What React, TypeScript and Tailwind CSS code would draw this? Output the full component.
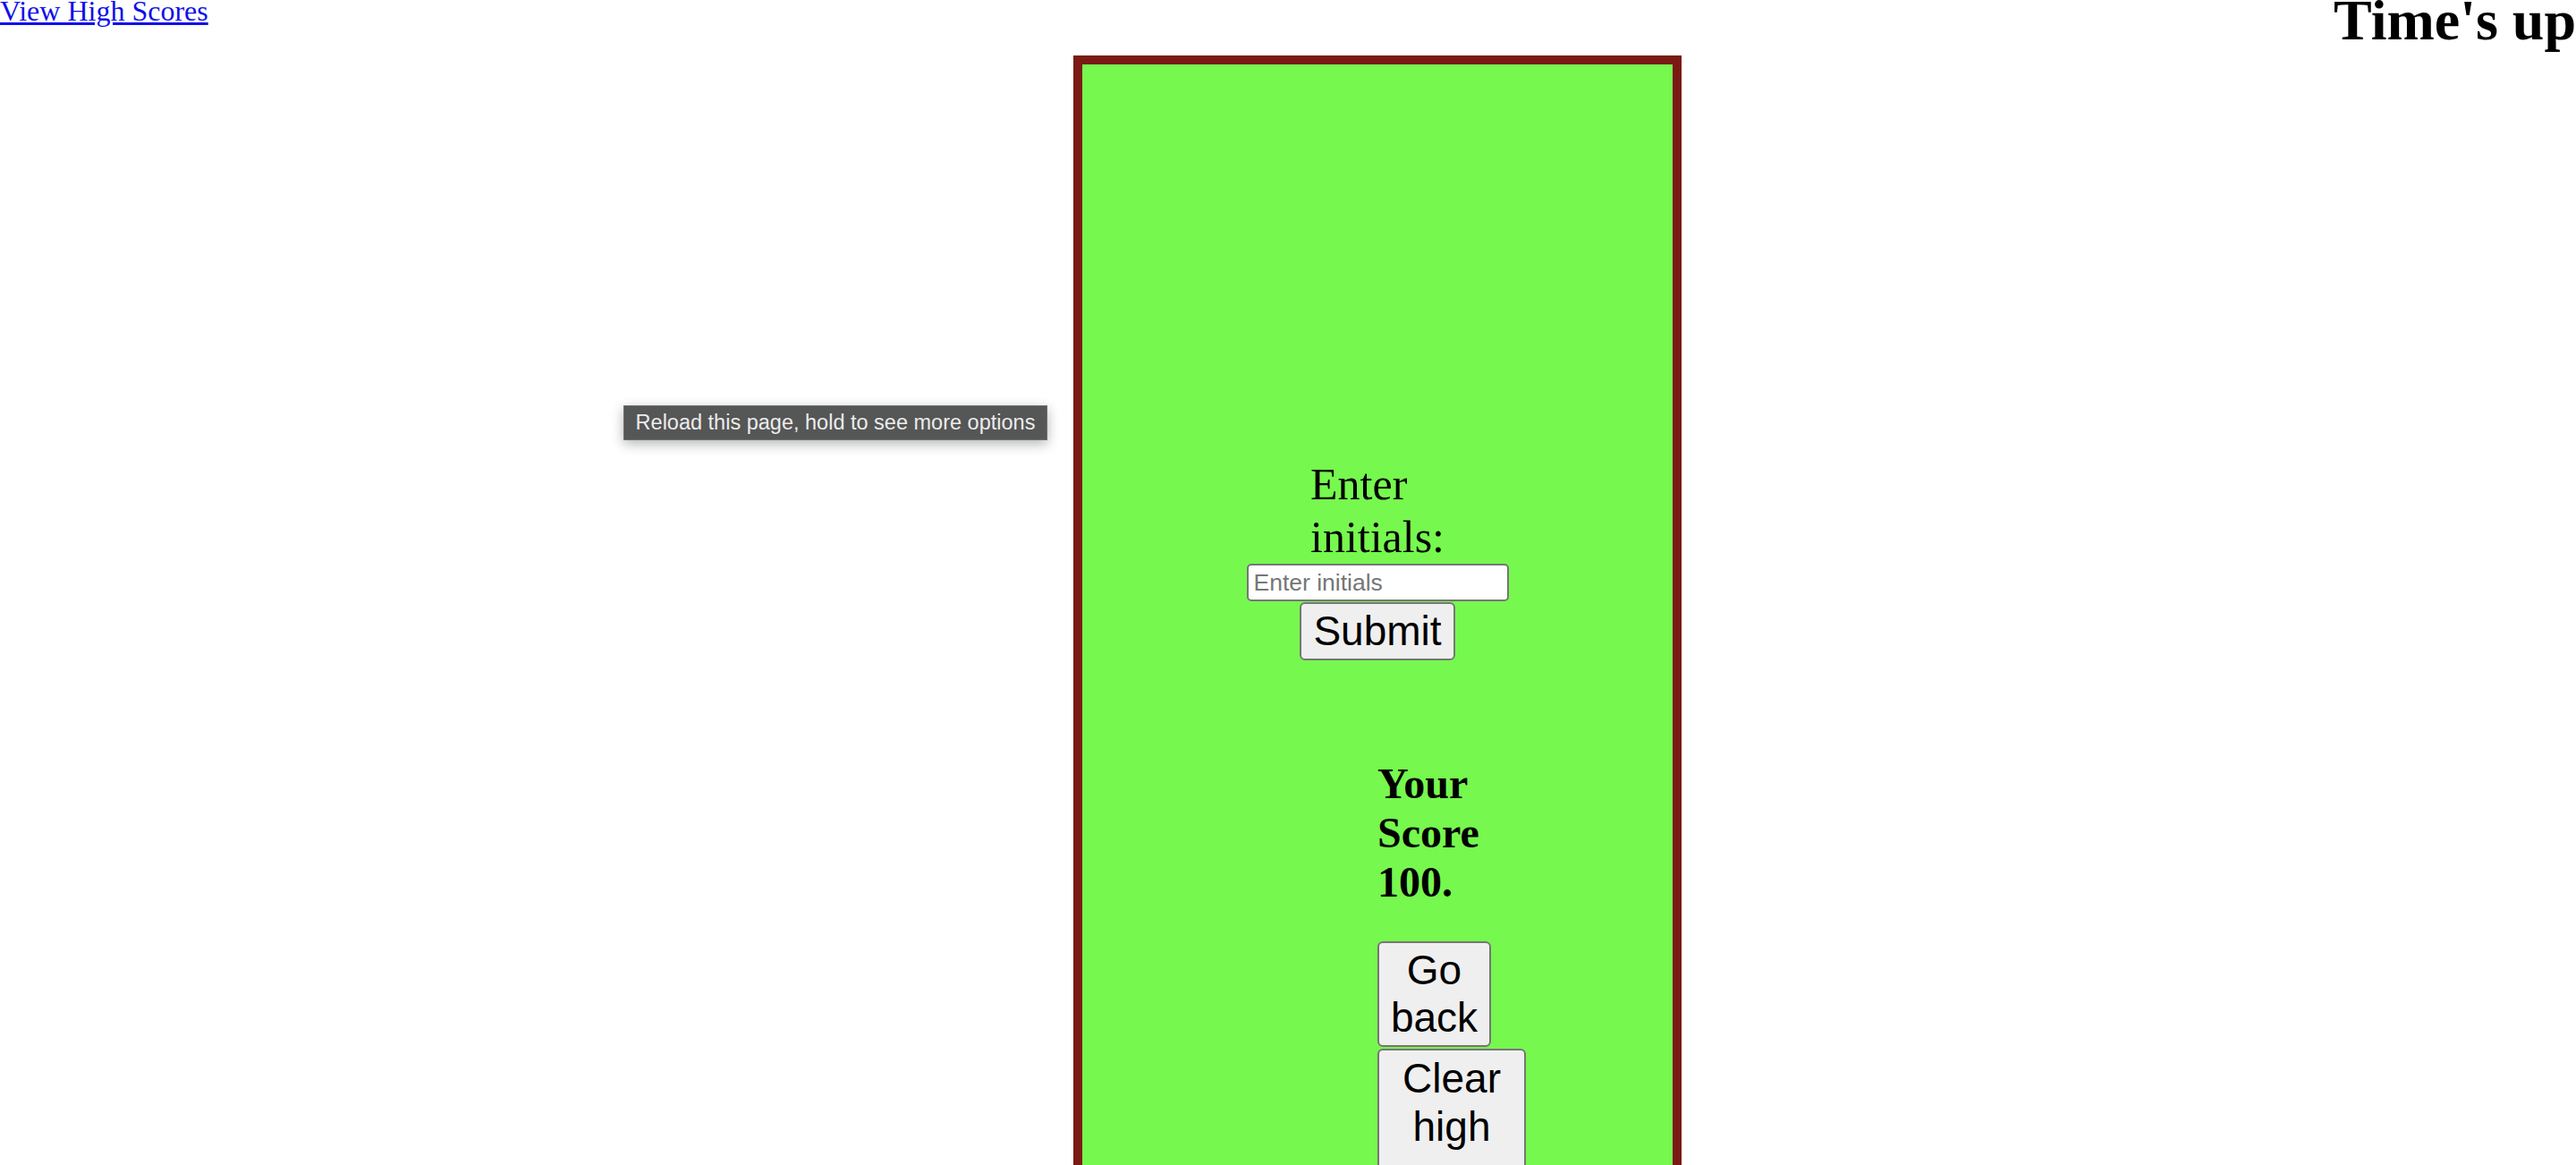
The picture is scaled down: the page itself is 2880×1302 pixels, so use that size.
import React from 'react';

const serif = "font-['Liberation_Serif','Times_New_Roman',serif]";
const sans = "font-['Liberation_Sans',Arial,sans-serif]";

// native-looking grey button, the way the browser draws a plain <button>
const btn =
    "bg-[#efefef] border-2 border-[#767676] rounded-[6px] text-black text-[46px] leading-[53px] py-[4px] text-center font-['Liberation_Sans',Arial,sans-serif]";

export default function App() {
    return (
        <div className="relative flow-root min-h-screen bg-white text-black">
            {/* HEADER */}
            <div className="flex justify-between items-start -mt-[14px]">
                <a href="#" className={`${serif} mt-[2px] text-[32px] leading-normal text-[#1010e8] underline`}>
                    View High Scores
                </a>
                <h1 className={`${serif} m-0 text-[64px] leading-[74px] font-bold`}>Time's up</h1>
            </div>

            {/* QUIZ CARD */}
            <div className="ml-[1200px] mt-[2px] w-[680px] border-[10px] border-[#7b1a15] bg-[#76f84e] pb-[40px]">
                <div className="flex flex-col">
                    <label className={`${serif} mt-[440px] pl-[255px] text-[50px] leading-[59px]`}>
                        Enter
                        <br />
                        initials:
                    </label>
                    <input
                        type="text"
                        placeholder="Enter initials"
                        className={`${sans} mx-auto h-[42px] w-[293px] bg-white border-2 border-[#767676] rounded-[5px] px-[6px] text-[26.5px] placeholder:text-[#767676] outline-none`}
                    />
                    <button className={`${btn} mx-auto mt-[1px] w-[174px]`}>Submit</button>

                    {/* SCORE */}
                    <div className="ml-[330px] mt-[110px] w-[176px] flex flex-col items-start">
                        <h2 className={`${serif} m-0 text-[48px] leading-[55px] font-bold`}>
                            Your Score 100.
                        </h2>
                        <button className={`${btn} mt-[39px] w-[127px]`}>Go back</button>
                        <button className={`${btn} mt-[2px] w-[166px] leading-[54px]`}>Clear high scores</button>
                    </div>
                </div>
            </div>

            {/* BROWSER TOOLTIP */}
            <div
                className={`${sans} absolute left-[697px] top-[453px] flex h-[39px] w-[474px] items-center justify-center bg-[#555656] border border-[#6e6e6e] text-[23.5px] text-[#ececec] shadow-[0_4px_14px_rgba(0,0,0,0.3)] whitespace-nowrap`}
            >
                Reload this page, hold to see more options
            </div>
        </div>
    );
}
